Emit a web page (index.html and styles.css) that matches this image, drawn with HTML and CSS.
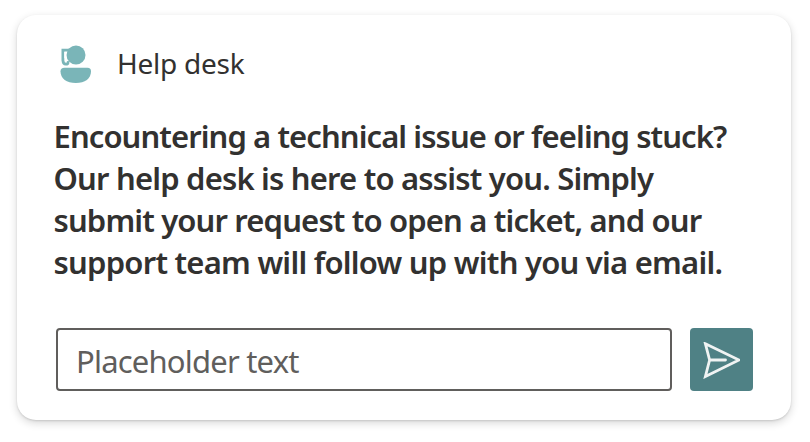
FILE: index.html
```html
<!DOCTYPE html>
<html lang="en">
<head>
<meta charset="utf-8">
<title>Help desk</title>
<link rel="stylesheet" href="styles.css">
</head>
<body>
<main class="card">
  <header class="card-header">
    <svg class="agent-icon" viewBox="0 0 32 40" aria-hidden="true">
      <circle cx="16" cy="10" r="9.5"/>
      <path class="headset" d="M9 5.2H2.9V15.3Q3.2 18.9 5.8 19.2Q8 19.3 8 17.4"/>
      <path d="M4.5 22.7H27.5Q31 22.7 31 26.2C31 33.5 25 38 15.8 38S.5 33.5 .5 26.2Q.5 22.7 4.5 22.7Z"/>
      <path class="ear" d="M5.2 7V13.2"/>
    </svg>
    <h1 class="card-title">Help desk</h1>
  </header>
  <p class="message">
    <span class="line line-1">Encountering a technical issue or feeling stuck?</span>
    <span class="line line-2">Our help desk is here to assist you. Simply</span>
    <span class="line line-3">submit your request to open a ticket, and our</span>
    <span class="line line-4">support team will follow up with you via email.</span>
  </p>
  <form class="request">
    <input class="request-input" type="text" placeholder="Placeholder text">
    <button class="send" type="button" aria-label="Send">
      <svg class="send-icon" viewBox="0 0 37 37" aria-hidden="true">
        <path d="M2.4 1.8L36 18L2.4 34.5L6.6 18ZM6.6 18H22.5"/>
      </svg>
    </button>
  </form>
</main>
</body>
</html>
```

FILE: styles.css
```css
* {
  box-sizing: border-box;
}

body {
  min-height: 442px;
  margin: 0;
  padding: 15px 19px 0 17px;
  background: #fff;
  font-family: "Noto Sans", "Open Sans", sans-serif;
  color: #323130;
}

.card {
  width: 774px;
  height: 405px;
  padding: 28px 38px 29px 37px;
  border-radius: 19px;
  background: #fff;
  box-shadow: 0 3px 8px rgba(0, 0, 0, .16), 0 1px 2px rgba(0, 0, 0, .12);
}

.card-header {
  display: flex;
  align-items: center;
  height: 42px;
  padding-left: 6px;
}

.agent-icon {
  width: 32px;
  height: 40px;
  margin-top: 2px;
  fill: #7ab5b8;
}

.headset {
  fill: none;
  stroke: #7ab5b8;
  stroke-width: 2.8;
  stroke-linecap: round;
}

.ear {
  stroke: #fff;
  stroke-width: 1.8;
}

.card-title {
  margin: 0 0 2px 25px;
  font-size: 28px;
  font-weight: 400;
  line-height: 42px;
  letter-spacing: -.25px;
}

.message {
  margin: 30px 0 0 -.5px;
  font-size: 31px;
  font-weight: 560;
  line-height: 42px;
}

.line {
  display: block;
  width: max-content;
}

.line-1 {
  letter-spacing: -.92px;
}

.line-2 {
  letter-spacing: -.81px;
}

.line-3 {
  letter-spacing: -.85px;
}

.line-4 {
  letter-spacing: -.76px;
}

.request {
  display: flex;
  gap: 18px;
  margin: 45px 0 0 2px;
}

.request-input {
  width: 616px;
  height: 63px;
  padding: 3px 18px 0;
  border: 2px solid #605e5c;
  border-radius: 4px;
  background: #fff;
  font-family: inherit;
  font-size: 31px;
  letter-spacing: -.8px;
}

.request-input::placeholder {
  color: #605e5c;
  opacity: 1;
}

.send {
  display: flex;
  align-items: center;
  justify-content: center;
  width: 63px;
  height: 63px;
  padding: 2px 0 0;
  border: 0;
  border-radius: 4px;
  background: #4f8185;
}

.send-icon {
  width: 37px;
  height: 37px;
  fill: none;
  stroke: #f0f3f3;
  stroke-width: 2.8;
  stroke-linecap: round;
}
```
